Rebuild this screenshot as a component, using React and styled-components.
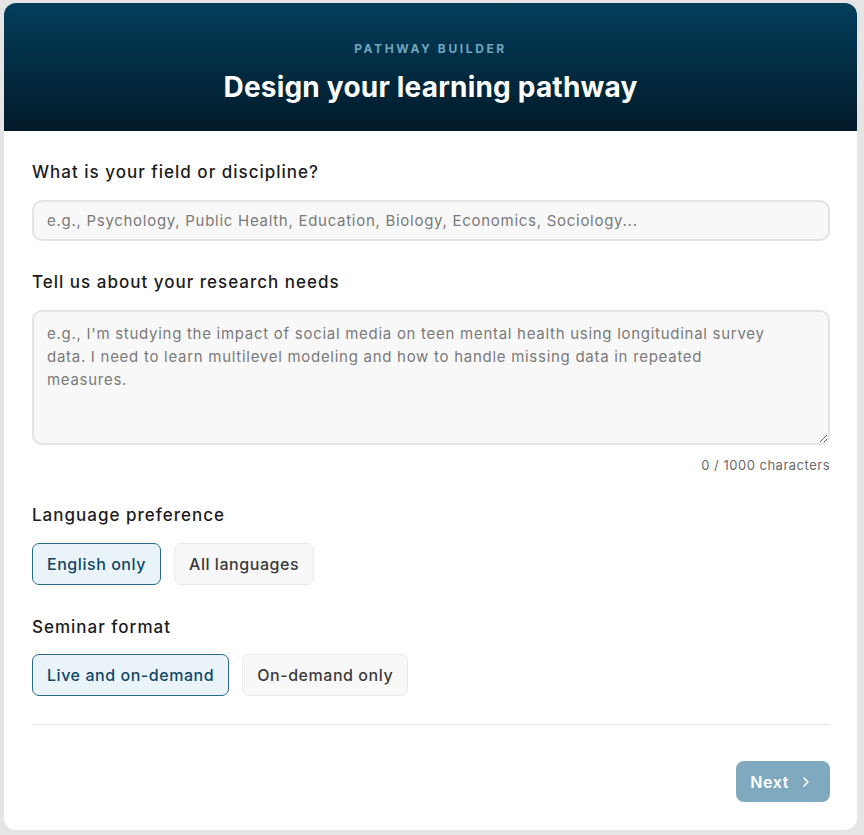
import React, { useState } from "react";
import styled, { createGlobalStyle } from "styled-components";

const GlobalStyle = createGlobalStyle`
  html, body {
    margin: 0;
    padding: 0;
    background: #e5e5e5;
    font-family: Inter, "Noto Sans", sans-serif;
  }
  * { box-sizing: border-box; }
`;

const Page = styled.div`
  padding: 3px 7px 5px 4px;
`;

const Card = styled.div`
  background: #fff;
  border-radius: 12px;
  overflow: hidden;
  height: 827px;
  display: flex;
  flex-direction: column;
`;

const Header = styled.header`
  height: 128px;
  background: linear-gradient(180deg, #033e5c 0%, #021a29 100%);
  display: flex;
  flex-direction: column;
  align-items: center;
  padding-top: 39px;
`;

const Eyebrow = styled.div`
  font-size: 12px;
  line-height: 14px;
  font-weight: 700;
  letter-spacing: 2.6px;
  color: #6fa6be;
  text-transform: uppercase;
`;

const Title = styled.h1`
  margin: 14px 0 0;
  font-size: 28px;
  line-height: 34px;
  font-weight: 700;
  color: #fff;
  letter-spacing: 0.2px;
`;

const Body = styled.div`
  flex: 1;
  padding: 30px 27px 0 28px;
  display: flex;
  flex-direction: column;
`;

const Label = styled.label`
  display: block;
  font-size: 17px;
  line-height: 22px;
  font-weight: 500;
  letter-spacing: 1px;
  color: #1c1c1c;
  margin-bottom: ${(p) => p.$gap || 17}px;
`;

const Section = styled.div`
  margin-bottom: ${(p) => p.$mb || 0}px;
`;

const field = `
  width: 100%;
  background: #f8f8f8;
  border: 2px solid #e3e3e3;
  border-radius: 10px;
  font-family: inherit;
  font-size: 15px;
  letter-spacing: 0.72px;
  color: #333;
  outline: none;
  &::placeholder { color: #7a7a7a; }
`;

const Input = styled.input`
  ${field}
  height: 41px;
  padding: 0 13px;
`;

const TextArea = styled.textarea`
  ${field}
  display: block;
  height: 135px;
  padding: 10px 44px 10px 13px;
  line-height: 23px;
  resize: vertical;
`;

const Counter = styled.div`
  text-align: right;
  font-size: 13px;
  line-height: 16px;
  letter-spacing: 0.5px;
  color: #6b6b6b;
  margin-top: 12px;
`;

const Chips = styled.div`
  display: flex;
  gap: 13px;
`;

const Chip = styled.button`
  height: 42px;
  padding: 0 14px;
  border-radius: 7px;
  font-family: inherit;
  font-size: 16px;
  font-weight: 500;
  letter-spacing: 0.55px;
  cursor: pointer;
  border: 1px solid ${(p) => (p.$active ? "#2b6a8b" : "#ebebeb")};
  background: ${(p) => (p.$active ? "#eaf3f8" : "#f8f8f8")};
  color: ${(p) => (p.$active ? "#0e4766" : "#3a3a3a")};
`;

const Divider = styled.hr`
  border: none;
  border-top: 1px solid #e4e4e4;
  margin: 28px 0 0;
`;

const Footer = styled.div`
  display: flex;
  justify-content: flex-end;
  padding-top: 36px;
`;

const NextButton = styled.button`
  height: 41px;
  padding: 0 20px 0 14px;
  border: none;
  border-radius: 8px;
  background: #7fa9bf;
  color: #fff;
  font-family: inherit;
  font-size: 16px;
  font-weight: 600;
  letter-spacing: 0.6px;
  display: flex;
  align-items: center;
  gap: 13px;
  cursor: not-allowed;
`;

const Chevron = () => (
  <svg width="8" height="12" viewBox="0 0 8 12" fill="none">
    <path d="M2 2l4 4-4 4" stroke="#fff" strokeWidth="1.6" strokeLinecap="round" strokeLinejoin="round" />
  </svg>
);

const App = () => {
  const [lang, setLang] = useState("en");
  const [format, setFormat] = useState("live");

  return (
    <Page>
      <GlobalStyle />
      <Card>
        <Header>
          <Eyebrow>Pathway Builder</Eyebrow>
          <Title>Design your learning pathway</Title>
        </Header>
        <Body>
          <Section $mb={30}>
            <Label>What is your field or discipline?</Label>
            <Input placeholder="e.g., Psychology, Public Health, Education, Biology, Economics, Sociology..." />
          </Section>
          <Section $mb={31}>
            <Label>Tell us about your research needs</Label>
            <TextArea placeholder="e.g., I'm studying the impact of social media on teen mental health using longitudinal survey data. I need to learn multilevel modeling and how to handle missing data in repeated measures." />
            <Counter>0 / 1000 characters</Counter>
          </Section>
          <Section $mb={31}>
            <Label>Language preference</Label>
            <Chips>
              <Chip $active={lang === "en"} onClick={() => setLang("en")}>English only</Chip>
              <Chip $active={lang === "all"} onClick={() => setLang("all")}>All languages</Chip>
            </Chips>
          </Section>
          <Section>
            <Label $gap={16}>Seminar format</Label>
            <Chips>
              <Chip $active={format === "live"} onClick={() => setFormat("live")}>Live and on-demand</Chip>
              <Chip $active={format === "demand"} onClick={() => setFormat("demand")}>On-demand only</Chip>
            </Chips>
          </Section>
          <Divider />
          <Footer>
            <NextButton>
              Next
              <Chevron />
            </NextButton>
          </Footer>
        </Body>
      </Card>
    </Page>
  );
};

export default App;
